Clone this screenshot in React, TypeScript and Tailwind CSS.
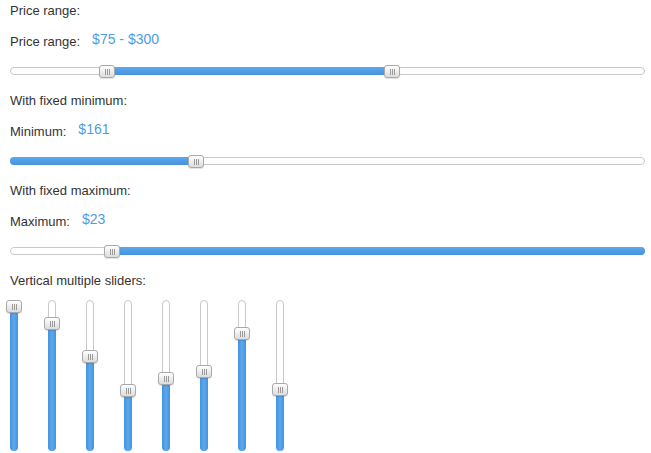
import type React from "react";

type RangeBlock = {
	title: string;
	label: string;
	value: string;
	// fill start/end and handle offsets in px from the track's left edge
	fillFrom: number;
	fillTo: number;
	handles: number[];
};

const BLOCKS: RangeBlock[] = [
	{
		title: "Price range:",
		label: "Price range:",
		value: "$75 - $300",
		fillFrom: 97,
		fillTo: 382,
		handles: [89, 374],
	},
	{
		title: "With fixed minimum:",
		label: "Minimum:",
		value: "$161",
		fillFrom: 0,
		fillTo: 186,
		handles: [178],
	},
	{
		title: "With fixed maximum:",
		label: "Maximum:",
		value: "$23",
		fillFrom: 102,
		fillTo: 635,
		handles: [94],
	},
];

// handle top offsets (px) on the 151px vertical tracks
const VERTICAL: number[] = [0, 17, 50, 84, 72, 65, 27, 83];

function Grip(): React.ReactElement {
	return (
		<span className="flex h-[6px] items-center gap-[1px]" aria-hidden>
			<span className="h-full w-px bg-[#9a9a9a]" />
			<span className="h-full w-px bg-[#9a9a9a]" />
			<span className="h-full w-px bg-[#9a9a9a]" />
		</span>
	);
}

function Handle({ style }: { style: React.CSSProperties }): React.ReactElement {
	return (
		<span
			className="absolute flex h-[13px] w-[16px] items-center justify-center rounded-[3px] border border-[#a9a9a9] bg-gradient-to-b from-white to-[#dcdcdc] shadow-[0_1px_1px_rgba(0,0,0,0.12)]"
			style={style}
		>
			<Grip />
		</span>
	);
}

function HorizontalSlider({ block }: { block: RangeBlock }): React.ReactElement {
	return (
		<div className="relative h-[8px] w-full rounded-full border border-[#c9c9c9] bg-white">
			<div
				className="absolute top-[-1px] h-[8px] rounded-full bg-gradient-to-b from-[#5ba8ec] to-[#4593e0]"
				style={{ left: block.fillFrom - 1, width: block.fillTo - block.fillFrom }}
			/>
			{block.handles.map((left) => (
				<Handle key={left} style={{ left: left - 1, top: -3 }} />
			))}
		</div>
	);
}

function VerticalSlider({ top }: { top: number }): React.ReactElement {
	return (
		<div className="relative h-[151px] w-[8px] rounded-full border border-[#c9c9c9] bg-white">
			<div
				className="absolute bottom-[-1px] left-[-1px] w-[8px] rounded-full bg-gradient-to-r from-[#4593e0] via-[#5ba8ec] to-[#4593e0]"
				style={{ top: top + 5 }}
			/>
			<Handle style={{ top: top - 1, left: -5 }} />
		</div>
	);
}

export default function App(): React.ReactElement {
	return (
		<div className="min-h-[453px] w-[651px] bg-white pl-[10px] pr-[6px] text-[13px] leading-[16px] text-[#333] font-['Liberation_Sans',Arial,sans-serif]">
			{BLOCKS.map((block) => (
				<section key={block.title} className="pt-[3px] pb-[15px]">
					<p className="h-[16px]">{block.title}</p>
					<div className="mt-[12px] flex items-start gap-[12px]">
						<span className="mt-[3px]">{block.label}</span>
						<span className="text-[14px] text-[#4d9de2]">{block.value}</span>
					</div>
					<div className="mt-[17px]">
						<HorizontalSlider block={block} />
					</div>
				</section>
			))}
			<p className="pt-[3px]">Vertical multiple sliders:</p>
			<div className="mt-[11px] flex gap-[30px]">
				{VERTICAL.map((top, i) => (
					<VerticalSlider key={i} top={top} />
				))}
			</div>
		</div>
	);
}
